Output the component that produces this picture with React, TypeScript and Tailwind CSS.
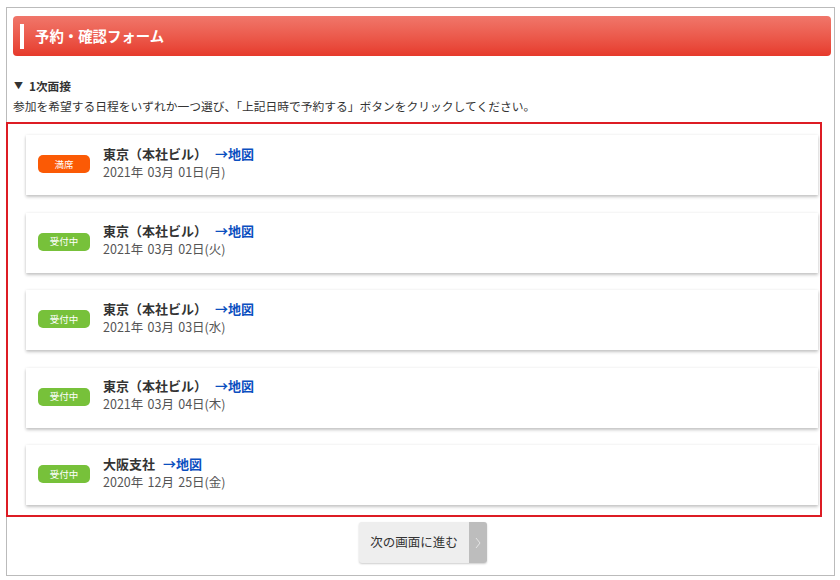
const F = '"Noto Sans CJK JP","Liberation Sans",sans-serif';
const rows = [
  { full: true, place: "東京（本社ビル）", date: "2021年 03月 01日(月)" },
  { full: false, place: "東京（本社ビル）", date: "2021年 03月 02日(火)" },
  { full: false, place: "東京（本社ビル）", date: "2021年 03月 03日(水)" },
  { full: false, place: "東京（本社ビル）", date: "2021年 03月 04日(木)" },
  { full: false, place: "大阪支社", date: "2020年 12月 25日(金)" },
];
export default function App() {
  return (
    <div className="w-[840px] h-[580px] bg-white overflow-hidden pt-[7px] pl-[6px] pr-[5px]" style={{ fontFamily: F }}>
      <div className="h-[569px] border border-[#bbbbbb] flex flex-col">
        <div className="ml-[6px] mr-[3px] mt-[8px] h-[40px] rounded-[4px] bg-gradient-to-b from-[#f0766a] to-[#e6392b] flex items-center pl-[7px]">
          <div className="w-[4px] h-[25px] bg-white" />
          <div className="ml-[11px] text-white font-bold text-[14.4px] leading-none">予約・確認フォーム</div>
        </div>
        <div className="mt-[22px] text-[11.7px] leading-[16px] font-bold text-[#333] pl-[6px] flex items-center">
          <span className="text-[9px] mr-[6px] pl-[1px]">▼</span>1次面接
        </div>
        <div className="mt-[4px] text-[11.75px] leading-[16px] text-[#333] pl-[6px] whitespace-nowrap">参加を希望する日程をいずれか一つ選び、「上記日時で予約する」ボタンをクリックしてください。</div>
        <div className="mt-[8px] h-[395px] w-[816px] border-2 border-[#dd1c24] -ml-px pl-[18px] pr-[2px] pt-[11px] flex flex-col gap-[17.5px]">
          {rows.map((r, i) => (
            <div key={i} className="h-[60px] shrink-0 bg-white shadow-[0_2px_3px_rgba(0,0,0,0.22),0_0_3px_rgba(0,0,0,0.07)] flex items-center pl-[12px] pb-[2px]">
              <div className={`w-[52px] h-[18px] rounded-[5px] text-white text-[9.5px] flex items-center justify-center ${r.full ? "bg-[#fb5a05]" : "bg-[#77c13a]"}`}>
                {r.full ? "満席" : "受付中"}
              </div>
              <div className="ml-[13px] pb-[3px]">
                <div className="text-[13px] leading-[18px] font-bold text-[#333]">
                  {r.place} <span className="text-[#0b4fc0] ml-[5px]">→地図</span>
                </div>
                <div className="text-[12.5px] leading-[18px] text-[#555] [word-spacing:1.5px]">{r.date}</div>
              </div>
            </div>
          ))}
        </div>
        <div className="mt-[5px] flex justify-center pl-[5px]">
          <div className="w-[128px] h-[41px] rounded-[3px] bg-[#eeeeee] flex items-stretch overflow-hidden shadow-[0_1px_2px_rgba(0,0,0,0.2)]">
            <div className="flex-1 flex items-center justify-center text-[12.5px] text-[#333]">次の画面に進む</div>
            <div className="w-[18px] bg-[#bdbdbd] flex items-center justify-center text-[#e4e4e4]">
              <svg width="6" height="12" viewBox="0 0 6 12" fill="none" stroke="currentColor" strokeWidth="1"><path d="M1 1l4 5-4 5" /></svg>
            </div>
          </div>
        </div>
      </div>
    </div>
  );
}
